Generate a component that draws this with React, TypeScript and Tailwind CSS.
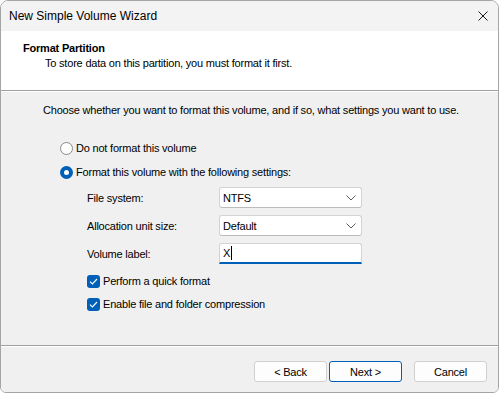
import React from "react";

const font = { fontFamily: '"Liberation Sans", Arial, sans-serif' };

const Chevron = () => (
  <svg width="10" height="6" viewBox="0 0 10 6" className="text-[#5d5d5d]">
    <path d="M0.5 0.5 L5 5 L9.5 0.5" fill="none" stroke="currentColor" strokeWidth="1" />
  </svg>
);

const Check = () => (
  <span className="flex h-[13px] w-[13px] items-center justify-center rounded-[3px] bg-[#005fb8]">
    <svg width="9" height="7" viewBox="0 0 9 7">
      <path d="M1 3.6 L3.4 6 L8 1" fill="none" stroke="white" strokeWidth="1.2" />
    </svg>
  </span>
);

const Select = ({ value }: { value: string }) => (
  <div className="flex h-[21px] w-[143px] items-center justify-between rounded-[3px] border border-[#d3d3d3] border-b-[#bcbcbc] bg-white pl-[3px] pr-[5px]">
    <span>{value}</span>
    <Chevron />
  </div>
);

const Button = ({ label, primary }: { label: string; primary?: boolean }) => (
  <div
    className={
      "flex h-[21px] w-[73px] items-center justify-center rounded-[3px] border bg-[#fdfdfd] " +
      (primary ? "border-[#005fb8]" : "border-[#d0d0d0]")
    }
  >
    {label}
  </div>
);

export default function App() {
  return (
    <div className="h-[393px] w-[499px] bg-white text-[11px] leading-[14px] tracking-[-0.2px] text-black" style={font}>
      <div className="flex h-full flex-col overflow-hidden rounded-t-[8px] rounded-b-[6px] border border-[#a5a5a5]">
        <div className="flex h-[30px] items-center justify-between bg-[#f3f3f3] pl-[8px] pr-[10px]">
          <span className="text-[12px] tracking-normal">New Simple Volume Wizard</span>
          <svg width="10" height="10" viewBox="0 0 10 10">
            <path d="M0.5 0.5 L9.5 9.5 M9.5 0.5 L0.5 9.5" stroke="#1a1a1a" strokeWidth="1" />
          </svg>
        </div>
        <div className="h-[59px] bg-white pl-[22px] pt-[10px]">
          <div className="font-bold">Format Partition</div>
          <div className="pl-[22px] pt-[1px]">To store data on this partition, you must format it first.</div>
        </div>
        <div className="h-px bg-[#a0a0a0]" />
        <div className="h-px bg-white" />
        <div className="flex h-[253px] flex-col bg-[#f0f0f0] pl-[42px] pt-[11px]">
          <div>Choose whether you want to format this volume, and if so, what settings you want to use.</div>
          <div className="flex flex-col gap-[10px] pl-[17px] pt-[24px]">
            <div className="flex items-center gap-[3px]">
              <span className="h-[13px] w-[13px] rounded-full border border-[#8a8a8a] bg-white" />
              <span>Do not format this volume</span>
            </div>
            <div className="flex items-center gap-[3px]">
              <span className="flex h-[13px] w-[13px] items-center justify-center rounded-full bg-[#005fb8]">
                <span className="h-[5px] w-[5px] rounded-full bg-white" />
              </span>
              <span>Format this volume with the following settings:</span>
            </div>
          </div>
          <div className="grid grid-cols-[132px_143px] items-center gap-y-[7px] pl-[44px] pt-[8px]">
            <span>File system:</span>
            <Select value="NTFS" />
            <span>Allocation unit size:</span>
            <Select value="Default" />
            <span>Volume label:</span>
            <div className="flex h-[21px] w-[143px] items-center rounded-t-[3px] border border-[#d3d3d3] border-b-2 border-b-[#005fb8] bg-white pl-[3px]">
              <span>X</span>
              <span className="ml-px h-[14px] w-px bg-black" />
            </div>
          </div>
          <div className="flex flex-col gap-[9px] pl-[44px] pt-[10px]">
            <div className="flex items-center gap-[3px]">
              <Check />
              <span>Perform a quick format</span>
            </div>
            <div className="flex items-center gap-[3px]">
              <Check />
              <span>Enable file and folder compression</span>
            </div>
          </div>
        </div>
        <div className="h-px bg-[#a0a0a0]" />
        <div className="h-px bg-white" />
        <div className="flex flex-1 items-start bg-[#f0f0f0] pl-[253px] pt-[14px]">
          <Button label="< Back" />
          <div className="ml-[2px]">
            <Button label="Next >" primary />
          </div>
          <div className="ml-[12px]">
            <Button label="Cancel" />
          </div>
        </div>
      </div>
    </div>
  );
}
